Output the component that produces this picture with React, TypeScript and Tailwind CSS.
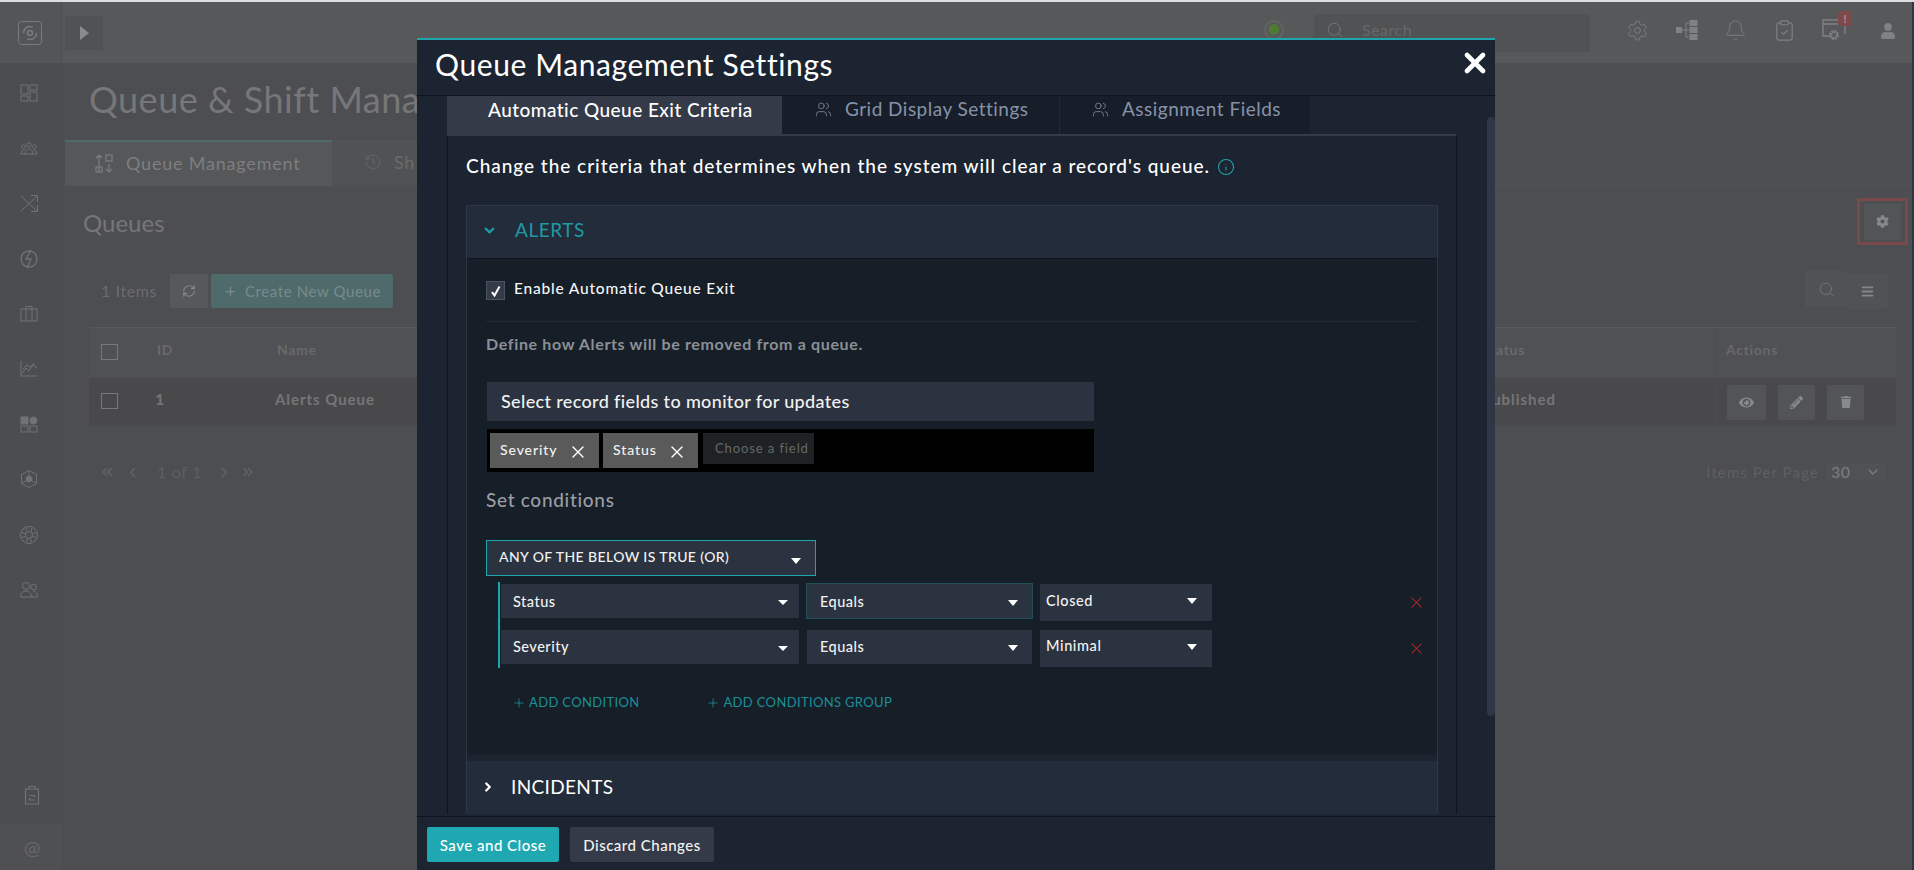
import React from 'react';
import { Settings, Bell, ClipboardCheck, Search, RefreshCw, Plus, ChevronDown, ChevronRight, ChevronLeft, ChevronsLeft, ChevronsRight, X, Info, Users, History } from 'lucide-react';
import { FaBars, FaCog, FaEye, FaPencilAlt, FaTrash, FaUser } from 'react-icons/fa';

const Caret = ({ big = false }: { big?: boolean }) => (
  <span className={big ? 'block w-0 h-0 border-x-[5.5px] border-x-transparent border-t-[6px] border-t-white' : 'block w-0 h-0 border-x-[5px] border-x-transparent border-t-[5px] border-t-white'} />
);

const stroke = { fill: 'none', stroke: '#717275', strokeWidth: 1 };

const NavIcon = ({ children }: { children: React.ReactNode }) => (
  <svg width="24" height="24" viewBox="0 0 24 24" {...stroke}>{children}</svg>
);

const navIcons = [
  <NavIcon key="dash"><rect x="4" y="4" width="7" height="9" /><rect x="13" y="4" width="7" height="5" /><rect x="4" y="15" width="7" height="5" /><rect x="13" y="11" width="7" height="9" /></NavIcon>,
  <NavIcon key="team"><circle cx="12" cy="9" r="2.2" /><circle cx="6.5" cy="10.5" r="1.8" /><circle cx="17.5" cy="10.5" r="1.8" /><path d="M4 18c0-3 2-4.5 4-4.5M20 18c0-3-2-4.5-4-4.5M8 18c0-3 2-5 4-5s4 2 4 5M4 18h16" /></NavIcon>,
  <NavIcon key="shuffle"><path d="M4 5l16 15M4 20L20 5M14 4.500h6.500V11M14 20.500h6.500V14" /></NavIcon>,
  <NavIcon key="bolt"><circle cx="12" cy="12" r="8" strokeWidth="1.400" /><path d="M14 3l-5 9h5l-4 9" strokeWidth="1.400" /></NavIcon>,
  <NavIcon key="case"><rect x="4" y="7" width="16" height="12" /><path d="M9 19V4.500h6V19" /></NavIcon>,
  <NavIcon key="chart"><path d="M4 4v15h16M5 16l4-5 3 3 4-6 4 3M6 12l4-4 3 2 5-4" /></NavIcon>,
  <NavIcon key="apps"><rect x="4" y="5" width="7" height="7" fill="#717275" /><circle cx="16.500" cy="8.500" r="3.500" fill="#717275" /><rect x="4" y="14" width="7" height="6" /><rect x="13" y="14" width="7" height="6" /></NavIcon>,
  <NavIcon key="hex"><path d="M12 3.500l7.500 4v9l-7.500 4-7.500-4v-9z" /><circle cx="12" cy="12" r="3" fill="#717275" /><path d="M12 4v5M5 16l4-2M19 16l-4-2" /></NavIcon>,
  <NavIcon key="ring"><circle cx="12" cy="12" r="8.500" /><circle cx="12" cy="12" r="3.500" /><path d="M9 5l1 3.500M15 5l-1 3.500M5 9.500l3.500 1M19 9.500l-3.500 1M5 14.500l3.500-1M19 14.500l-3.500-1M9.500 19l1-3.500M14.500 19l-1-3.500" /></NavIcon>,
  <NavIcon key="users"><circle cx="9" cy="8" r="3.500" /><circle cx="16.500" cy="9" r="2.800" /><path d="M3.500 19c0-4 2.500-6 5.500-6s5.500 2 5.500 6zM16 13c2.500 0 4.500 2 4.500 6h-6" /></NavIcon>,
];

const RowButton = ({ w, children }: { w: string; children: React.ReactNode }) => (
  <span className={`${w} h-[35px] rounded-[2px] bg-[#535456] flex items-center justify-center`}>{children}</span>
);

const Select = ({ label, leading }: { label: string; leading: string }) => (
  <div className="w-[298px] h-[34px] bg-[#2b3240] flex justify-between pl-[12px] pr-[11px]">
    <span className={`${leading} text-[14.500px] font-medium tracking-[0.5px] text-[#f2f2f2]`}>{label}</span>
    <span className="mt-[16px]"><Caret /></span>
  </div>
);

const Tag = ({ label, w }: { label: string; w: string }) => (
  <span className={`${w} h-[35px] bg-[#5a5a5a] flex items-center pl-[10px] pb-[2px] text-[14px] font-medium tracking-[0.9px] text-[#f2f2f2]`}>
    {label}
    <X size={20} strokeWidth={1.600} className="ml-auto mr-[11px] mt-[5px] text-white" />
  </span>
);

export default function App() {
  return (
    <div className="relative h-[870px] w-full overflow-hidden bg-[#4d4e51] font-['Lato',sans-serif]">
      <div className="h-[2px] bg-[#dedede]" />
      <div className="flex h-[868px] border-r-2 border-[#2f3746]">
        {/* dimmed sidebar */}
        <aside className="w-[62px] shrink-0 flex flex-col items-center bg-[#4c4d50]">
          <div className="h-[61px] w-full bg-[#545557] flex items-center justify-center pr-[2px] border-r border-[#4d4e51]">
            <svg width="24" height="24" viewBox="0 0 24 24" fill="none" stroke="#7a7b7d" strokeWidth="1">
              <rect x="0.500" y="0.500" width="23" height="23" rx="3" />
              <circle cx="12" cy="12" r="2.500" strokeWidth="1.600" />
              <path d="M5.500 12a6.500 6.500 0 0 1 9-6M18.500 12a6.500 6.500 0 0 1-9 6" strokeWidth="1.400" />
            </svg>
          </div>
          <div className="flex flex-col items-center gap-[31.200px] pt-[18px] pr-[4px]">{navIcons}</div>
          <svg width="24" height="24" viewBox="0 0 24 24" fill="none" stroke="#717275" strokeWidth="1.200" className="mt-auto mb-[17px] ml-[2px]">
            <path d="M5 6h14M9 6V3.500h6V6M5.500 6v15h13V6" />
            <path d="M9.500 12.500h5v2M14.500 17h-5v-2" />
          </svg>
          <div className="h-[46px] w-full flex items-center justify-center text-[#66676a] text-[20px] pl-[2px] bg-[#4f5053]">@</div>
        </aside>

        <main className="flex-1 min-w-0 flex flex-col">
          {/* top bar */}
          <header className="h-[61px] shrink-0 bg-[#57585a] flex items-center pl-[3px]">
            <span className="w-[38px] h-[34px] bg-[#515254] flex items-center justify-center">
              <span className="w-0 h-0 border-y-[7px] border-y-transparent border-l-[9px] border-l-[#8a8b8c]" />
            </span>
            <span className="ml-auto -mt-[6px] w-[20px] h-[20px] rounded-full border-2 border-[#5f665f] flex items-center justify-center">
              <span className="w-[10px] h-[11px] rounded-full bg-[#4f7a35]" />
            </span>
            <div className="ml-[30px] w-[276px] h-[38px] bg-[#515254] flex items-center pl-[12px] pb-[5px] gap-[18px] text-[16px] tracking-[0.5px] text-[#666769]">
              <Search size={18} strokeWidth={1.200} className="text-[#77787b]" />
              Search
            </div>
            <div className="ml-[23px] -mt-[5px] flex items-center text-[#7f8082]">
              <span className="w-[49px] flex justify-center"><Settings size={23} strokeWidth={1} /></span>
              <span className="w-[49px] flex justify-center">
                <svg width="22" height="20" viewBox="0 0 22 20" fill="#808183" stroke="#808183" strokeWidth="1">
                  <rect x="0.500" y="7.500" width="5" height="5" />
                  <path d="M5 10h5M10 3v14M10 3h3M10 10h3M10 17h3" fill="none" />
                  <rect x="14" y="0.500" width="7" height="5" />
                  <rect x="14" y="7.500" width="7" height="5" />
                  <rect x="14" y="14.500" width="7" height="5" />
                </svg>
              </span>
              <span className="w-[49px] flex justify-center"><Bell size={23} strokeWidth={1} /></span>
              <span className="w-[49px] flex justify-center"><ClipboardCheck size={23} strokeWidth={1.200} /></span>
              <span className="relative w-[49px] flex justify-center">
                <svg width="26" height="24" viewBox="0 0 26 24" fill="none" stroke="#808183" strokeWidth="1.400">
                  <path d="M8 18H2V2h22v14M2 6h22" />
                  <circle cx="13" cy="17" r="3.500" strokeWidth="3" strokeDasharray="2 0.700" />
                </svg>
                <span className="absolute left-[29px] top-[-7px] w-[14px] h-[15px] rounded-[2px] bg-[#7d4a4c] text-[#b8888a] text-[12px] font-bold leading-[15px] text-center">!</span>
              </span>
              <span className="ml-[5px] w-[49px] flex justify-center"><FaUser size={16} className="mt-[2px] text-[#808183]" /></span>
            </div>
          </header>

          {/* page behind the modal */}
          <div className="flex-1 flex flex-col">
            <h1 className="ml-[27px] mt-[14px] h-[44px] w-[328px] overflow-hidden whitespace-nowrap text-[36px] leading-[44px] tracking-[0.5px] text-[#767778]">Queue &amp; Shift Management</h1>
            <nav className="ml-[3px] mt-[19px] flex h-[46px] items-start border-b border-[#535456]">
              <div className="w-[267px] h-[46px] border-t-2 border-[#4e6a6a] bg-[#565759] flex items-center pl-[30px] pb-[2px] gap-[12px] text-[18px] tracking-[0.8px] text-[#7d7e80]">
                <svg width="19" height="19" viewBox="0 0 19 19" fill="none" stroke="#7d7e80" strokeWidth="1.200"><path d="M4 18V11M4 1v10M1 4l3-3 3 3" /><rect x="11" y="1" width="6" height="6" /><rect x="1" y="13" width="6" height="5" /><path d="M14 10v8M11 15l3 3 3-3" /></svg>
                Queue Management
              </div>
              <div className="w-[300px] h-[44px] bg-[#515254] flex items-center pl-[32px] gap-[12px] text-[18px] tracking-[0.7px] text-[#6a6b6d]">
                <History size={18} strokeWidth={1} />
                <span className="w-[22px] overflow-hidden whitespace-nowrap">Shift Management</span>
              </div>
            </nav>
            <div className="flex items-start pl-[21px] pr-[4px] pt-[12px] h-[88px]">
              <h2 className="mt-[12px] text-[24px] leading-[26px] text-[#757678]">Queues</h2>
              <div className="ml-auto w-[51px] h-[47px] border-[3px] border-[#7a4a4a] flex items-center justify-center">
                <span className="w-[37px] h-[36px] bg-[#535456] flex items-center justify-center">
                  <FaCog size={13} className="text-[#88898b]" />
                </span>
              </div>
            </div>
            {/* toolbar */}
            <div className="flex items-start pl-[39px] pr-[24px] h-[53px]">
              <span className="mt-[5px] w-[69px] text-[16px] tracking-[0.6px] text-[#6b6c6e]">1 Items</span>
              <span className="w-[38px] h-[34px] bg-[#575859] flex items-center justify-center text-[#858688]"><RefreshCw size={14} /></span>
              <span className="ml-[3px] w-[182px] h-[34px] rounded-[2px] bg-[#4e6a6b] flex items-center pl-[12px] gap-[7px] text-[15px] tracking-[0.6px] text-[#7a8a8b]"><Plus size={15} />Create New Queue</span>
              <span className="ml-auto -mt-[3px] w-[42px] h-[36px] rounded-[2px] bg-[#515254] flex items-center justify-center text-[#77787b]"><Search size={17} strokeWidth={1.200} /></span>
              <span className="-mt-[1px] w-[41px] h-[36px] rounded-[2px] bg-[#515254] flex items-center justify-center text-[#858688]"><FaBars size={13} /></span>
            </div>
            {/* table */}
            <div className="ml-[27px] mr-[16px] border-t border-[#58595b]">
              <div className="grid grid-cols-[68px_120px_1205px_234px_1fr] h-[50px] items-center bg-[#505154] text-[14px] font-bold tracking-[0.7px] text-[#68696b]">
                <span className="ml-[12px] -mt-[2px] w-[17px] h-[16px] border border-[#77787b]" />
                <span className="pb-[7px]">ID</span>
                <span className="pb-[7px]">Name</span>
                <span className="pb-[7px]">Status</span>
                <span className="pl-[9px] pb-[7px] h-full flex items-center border-l border-[#4c4d4f]">Actions</span>
              </div>
              <div className="grid grid-cols-[68px_120px_1205px_234px_1fr] h-[48px] items-center bg-[#49494b] text-[15px] font-bold tracking-[0.95px] text-[#757678]">
                <span className="ml-[12px] -mt-[2px] w-[17px] h-[16px] border border-[#77787b]" />
                <span className="-ml-[2px] pb-[6px] text-[16px]">1</span>
                <span className="-ml-[2px] pb-[6px]">Alerts Queue</span>
                <span className="pb-[6px]">Published</span>
                <span className="pl-[10px] h-full flex items-center gap-[12px] border-l border-[#4c4d4f] text-[#88898b]">
                  <RowButton w="w-[39px]"><FaEye size={15} /></RowButton>
                  <RowButton w="w-[37px]"><FaPencilAlt size={13} /></RowButton>
                  <RowButton w="w-[37px]"><FaTrash size={12} /></RowButton>
                </span>
              </div>
            </div>
            {/* pagination */}
            <div className="flex items-center h-[18px] mt-[37px] pl-[37px] pr-[26px] text-[#5e5f61]">
              <ChevronsLeft size={16} strokeWidth={3} />
              <ChevronLeft size={15} strokeWidth={3} className="ml-[10px]" />
              <span className="ml-[17px] text-[16px] tracking-[0.7px]">1 of 1</span>
              <ChevronRight size={15} strokeWidth={3} className="ml-[15px]" />
              <ChevronsRight size={16} strokeWidth={3} className="ml-[8px]" />
              <span className="ml-auto text-[15px] tracking-[1.100px]">Items Per Page</span>
              <span className="ml-[7px] w-[60px] h-[18px] bg-[#505154] flex items-center justify-between pl-[5px] pr-[5px] text-[16px] font-medium tracking-[0.5px] text-[#7a7b7d]">
                30<ChevronDown size={16} strokeWidth={2.200} />
              </span>
            </div>
          </div>
        </main>
      </div>

      {/* modal */}
      <div className="absolute left-[417px] top-[38px] w-[1078px] h-[832px] flex flex-col border-t-2 border-[#1fa5ad] bg-[#1c2331]">
        <div className="h-[56px] shrink-0 flex items-center justify-between pl-[18px] pr-[4px] border-b border-[#0f141c]">
          <h3 className="text-[30px] leading-[36px] tracking-[0.6px] text-white -mt-[7px]">Queue Management Settings</h3>
          <X size={32} strokeWidth={3.500} className="text-white -mt-[10px]" />
        </div>

        <div className="relative flex-1 min-h-0 pl-[30px] pr-[38px]">
          <div className="absolute right-0 top-[21px] h-[599px] w-[8px] rounded-[4px] bg-[#2f3746]" />
          <div className="flex h-[40px] items-start">
            <div className="w-[335px] h-[40px] bg-[#343a47] flex items-center pl-[41px] pb-[11px] text-[19px] font-medium tracking-[0.45px] text-white">Automatic Queue Exit Criteria</div>
            <div className="w-[278px] h-[38px] bg-[#181e29] border-r border-[#232a37] flex items-center pl-[33px] pb-[12px] gap-[13px] text-[19px] tracking-[0.48px] text-[#8593a8]">
              <Users size={17} strokeWidth={1.100} />Grid Display Settings
            </div>
            <div className="w-[250px] h-[38px] bg-[#181e29] flex items-center pl-[32px] pb-[12px] gap-[13px] text-[19px] tracking-[0.48px] text-[#8593a8]">
              <Users size={17} strokeWidth={1.100} />Assignment Fields
            </div>
          </div>
          <div className="h-[680px] overflow-hidden -mt-[2px] border-t-2 border-[#343a47] border-x border-x-[#10151d] px-[18px]">
            <div className="flex items-center gap-[7px] h-[69px] pb-[8px] text-[19px] font-medium tracking-[0.97px] text-white">
              Change the criteria that determines when the system will clear a record's queue.
              <Info size={18} strokeWidth={1.400} className="text-[#1fa5ad]" />
            </div>

            <div className="border-x border-t border-[#2f3746]">
              <div className="h-[53px] bg-[#232c3a] border-b border-[#10151d] flex items-center pl-[15px] pb-[3px] text-[19px] tracking-[0.55px] text-[#1f9aa5]">
                <ChevronDown size={15} strokeWidth={3.500} />
                <span className="ml-[18px]">ALERTS</span>
              </div>
              <div className="h-[496px] bg-[#161e28] pl-[19px] pr-[19px]">
                <div className="h-[63px] border-b border-[#232a37] flex items-start pt-[21px]">
                  <span className="w-[19px] h-[19px] mt-[1px] bg-[#343a47] border border-[#4b5260] flex items-center justify-center">
                    <svg width="12" height="12" viewBox="0 0 12 12" fill="none" stroke="white" strokeWidth="2"><path d="M2 7l2.500 3.500L9.500 1.500" /></svg>
                  </span>
                  <span className="ml-[9px] -mt-[2px] text-[15.500px] leading-[20px] font-medium tracking-[0.8px] text-[#f5f5f5]">Enable Automatic Queue Exit</span>
                </div>
                <p className="mt-[12px] text-[16px] leading-[20px] font-bold tracking-[0.65px] text-[#8b8f96]">Define how Alerts will be removed from a queue.</p>
                <div className="mt-[28px] ml-[1px] w-[607px] h-[39px] bg-[#2b3240] flex items-center pl-[14px] text-[18px] font-medium tracking-[0.35px] text-[#f2f2f2]">Select record fields to monitor for updates</div>
                <div className="mt-[8px] ml-[1px] w-[607px] h-[43px] bg-black flex items-start gap-[4px] pl-[3px] pt-[4px]">
                  <Tag label="Severity" w="w-[109px]" />
                  <Tag label="Status" w="w-[95px]" />
                  <span className="ml-[1px] w-[111px] h-[31px] bg-[#1e2225] pl-[12px] whitespace-nowrap text-[13px] leading-[30px] tracking-[0.9px] text-[#666769]">Choose a field</span>
                </div>
                <p className="mt-[16px] text-[19px] leading-[24px] font-medium tracking-[0.7px] text-[#9a9da3]">Set conditions</p>
                <div className="mt-[28px] w-[330px] h-[36px] bg-[#2b3240] border border-[#1fa5ad] flex justify-between pl-[12px] pr-[14px]">
                  <span className="text-[14px] leading-[31px] font-medium tracking-[0.4px] text-[#f2f2f2]">ANY OF THE BELOW IS TRUE (OR)</span>
                  <span className="mt-[17px]"><Caret big /></span>
                </div>
                <div className="mt-[6px] ml-[12px] -mr-[4px] border-l-2 border-[#1fa5ad] pt-[2px] h-[86px]">
                  <div className="flex items-start h-[46px] pl-[1px]">
                    <Select label="Status" leading="leading-[35px]" />
                    <div className="ml-[7px] -mt-[1px] w-[227px] h-[36px] bg-[#2b3240] border border-[#214f57] flex justify-between pl-[13px] pr-[14px]">
                      <span className="text-[14.500px] leading-[35px] font-medium tracking-[0.5px] text-[#f2f2f2]">Equals</span>
                      <span className="mt-[16px]"><Caret big /></span>
                    </div>
                    <div className="ml-[7px] w-[172px] h-[37px] bg-[#2b3240] flex justify-between pl-[6px] pr-[15px]">
                      <span className="text-[14.500px] leading-[34px] font-medium tracking-[0.6px] text-[#f2f2f2]">Closed</span>
                      <span className="mt-[14px]"><Caret big /></span>
                    </div>
                    <X size={19} strokeWidth={1.300} className="ml-auto -mr-[4px] mt-[9px] text-[#c8262c]" />
                  </div>
                  <div className="flex items-start h-[38px] pl-[1px]">
                    <Select label="Severity" leading="leading-[34px]" />
                    <div className="ml-[8px] w-[225px] h-[34px] bg-[#2b3240] flex justify-between pl-[13px] pr-[14px]">
                      <span className="text-[14.500px] leading-[34px] font-medium tracking-[0.5px] text-[#f2f2f2]">Equals</span>
                      <span className="mt-[15px]"><Caret big /></span>
                    </div>
                    <div className="ml-[8px] w-[172px] h-[37px] bg-[#2b3240] flex justify-between pl-[6px] pr-[15px]">
                      <span className="text-[14.500px] leading-[31px] font-medium tracking-[0.6px] text-[#f2f2f2]">Minimal</span>
                      <span className="mt-[14px]"><Caret big /></span>
                    </div>
                    <X size={19} strokeWidth={1.300} className="ml-auto -mr-[4px] mt-[9px] text-[#c8262c]" />
                  </div>
                </div>
                <div className="mt-[25px] ml-[26px] flex items-center h-[20px] text-[13px] tracking-[0.35px] text-[#1b8f99]">
                  <Plus size={14} strokeWidth={1.400} />
                  <span className="ml-[3px]">ADD CONDITION</span>
                  <Plus size={14} strokeWidth={1.400} className="ml-[67px]" />
                  <span className="ml-[3px]">ADD CONDITIONS GROUP</span>
                </div>
              </div>
              <div className="h-[6px] bg-[#1c2430]" />
              <div className="h-[55px] bg-[#232c3a] flex items-center pl-[14px] pb-[3px] text-[19px] tracking-[0.35px] text-white">
                <ChevronRight size={14} strokeWidth={4} />
                <span className="ml-[16px]">INCIDENTS</span>
              </div>
            </div>
          </div>
        </div>

        <div className="h-[54px] shrink-0 border-t border-[#0f141c] flex items-start gap-[11px] pl-[10px] pt-[10px]">
          <button className="w-[132px] h-[35px] rounded-[2px] bg-[#20a8b2] pt-[1px] text-[15px] font-medium tracking-[0.5px] text-white">Save and Close</button>
          <button className="w-[144px] h-[35px] rounded-[2px] bg-[#343a47] pt-[1px] text-[15px] font-medium tracking-[0.5px] text-[#f2f2f2]">Discard Changes</button>
        </div>
      </div>
    </div>
  );
}
